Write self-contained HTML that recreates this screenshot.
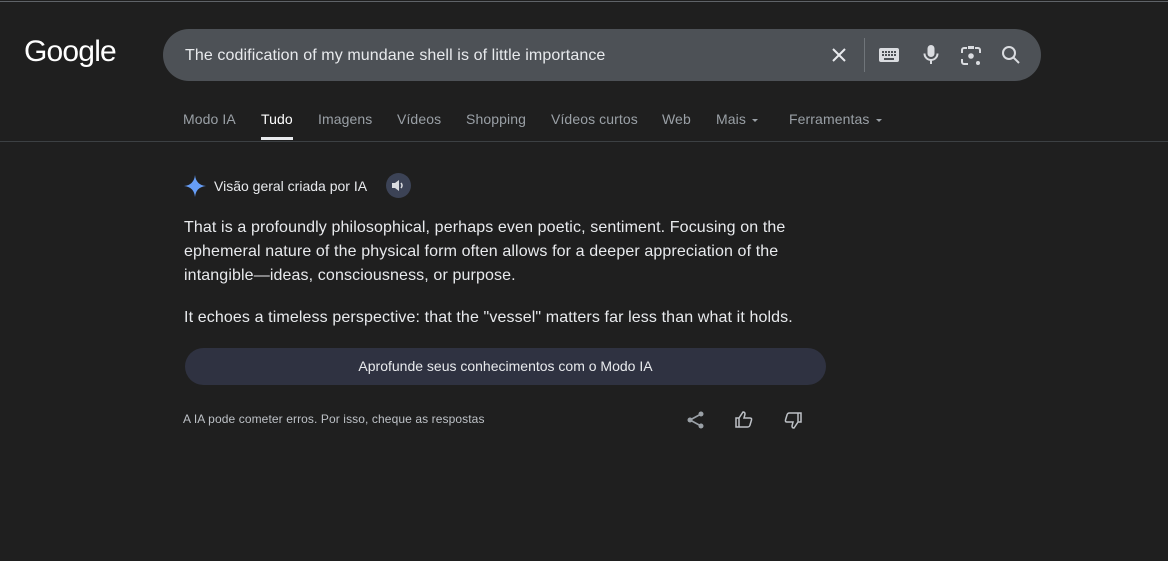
<!DOCTYPE html>
<html><head><meta charset="utf-8"><style>
body{margin:0;width:1168px;height:561px;background:#1f1f1f;font-family:"Liberation Sans",Arial,sans-serif;position:relative;overflow:hidden;color:#e8eaed}
.a{position:absolute}
.top{left:0;top:1px;width:1168px;height:1px;background:#5f6368}
.logo{left:24px;top:35px;font-size:30px;color:#fff;letter-spacing:-0.8px}
.sb{left:163px;top:29px;width:878px;height:52px;background:#4d5156;border-radius:26px}
.q{left:185px;top:47px;font-size:16px;color:#e8eaed;letter-spacing:0.1px}
.tab{top:111px;font-size:14px;color:#9aa0a6;letter-spacing:0.1px}
.line{left:0;top:141px;width:1168px;height:1px;background:#3c4043}
.p{left:184px;font-size:16px;color:#e8eaed;line-height:24px;width:660px;letter-spacing:0.12px}
.ar{display:inline-block;width:0;height:0;border-left:3.5px solid transparent;border-right:3.5px solid transparent;border-top:3.5px solid #9aa0a6;vertical-align:middle;margin-left:3px}
</style></head><body>
<div class="a top"></div>
<div class="a logo">Google</div>
<div class="a sb"></div>
<div class="a q">The codification of my mundane shell is of little importance</div>
<svg class="a" style="left:829px;top:45px" width="20" height="20" viewBox="0 0 20 20"><path d="M4 4L16 16M16 4L4 16" stroke="#e8eaed" stroke-width="2"/></svg>
<div class="a" style="left:864px;top:38px;width:1px;height:34px;background:#70757a"></div>
<svg class="a" style="left:878px;top:47px" width="22" height="16" viewBox="0 0 22 16"><rect x="1" y="1" width="20" height="14" rx="2" fill="#dadce0"/><g fill="#4d5156"><rect x="4" y="4" width="2" height="2"/><rect x="7" y="4" width="2" height="2"/><rect x="10" y="4" width="2" height="2"/><rect x="13" y="4" width="2" height="2"/><rect x="16" y="4" width="2" height="2"/><rect x="4" y="7" width="2" height="2"/><rect x="7" y="7" width="2" height="2"/><rect x="10" y="7" width="2" height="2"/><rect x="13" y="7" width="2" height="2"/><rect x="16" y="7" width="2" height="2"/><rect x="6" y="11" width="10" height="2"/></g></svg>
<svg class="a" style="left:921px;top:44px" width="20" height="22" viewBox="0 0 20 22"><rect x="6.5" y="1" width="7" height="12" rx="3.5" fill="#dadce0"/><path d="M3.5 9.5a6.5 6.5 0 0 0 13 0M10 16v4" stroke="#dadce0" stroke-width="2" fill="none"/></svg>
<svg class="a" style="left:960px;top:45px" width="22" height="22" viewBox="0 0 22 22"><path d="M2 8V5a2 2 0 0 1 2-2h3M15 3h3a2 2 0 0 1 2 2v3M2 14v3a2 2 0 0 0 2 2h4" stroke="#dadce0" stroke-width="2" fill="none"/><rect x="8" y="1" width="6" height="3" fill="#dadce0"/><circle cx="11" cy="11" r="2.8" fill="#dadce0"/><circle cx="18" cy="18" r="2" fill="#dadce0"/></svg>
<svg class="a" style="left:1001px;top:45px" width="20" height="20" viewBox="0 0 20 20"><circle cx="8" cy="8" r="6" stroke="#dadce0" stroke-width="2" fill="none"/><path d="M12.5 12.5L18 18" stroke="#dadce0" stroke-width="2"/></svg>
<div class="a tab" style="left:183px">Modo IA</div>
<div class="a tab" style="left:261px;color:#fff">Tudo</div>
<div class="a" style="left:261px;top:137px;width:32px;height:3px;background:#e8eaed"></div>
<div class="a tab" style="left:318px">Imagens</div>
<div class="a tab" style="left:397px">Vídeos</div>
<div class="a tab" style="left:466px">Shopping</div>
<div class="a tab" style="left:551px">Vídeos curtos</div>
<div class="a tab" style="left:662px">Web</div>
<div class="a tab" style="left:716px">Mais<span class="ar" style="margin-left:6px"></span></div>
<div class="a tab" style="left:789px">Ferramentas<span class="ar" style="margin-left:7px"></span></div>
<div class="a line"></div>
<svg class="a" style="left:183px;top:174px" width="24" height="24" viewBox="0 0 24 24"><path d="M12 1Q13 11 23 12Q13 13 12 23Q11 13 1 12Q11 11 12 1Z" fill="#669df6"/></svg>
<div class="a" style="left:214px;top:178px;font-size:14px;color:#e8eaed">Visão geral criada por IA</div>
<div class="a" style="left:386px;top:173px;width:25px;height:25px;border-radius:50%;background:#3c4356"></div>
<svg class="a" style="left:391px;top:179px" width="14" height="13" viewBox="0 0 14 13"><path d="M1 4h3l4-3v11l-4-3H1z" fill="#dadce0"/><path d="M10 4q2 2.5 0 5" stroke="#dadce0" stroke-width="1.5" fill="none"/></svg>
<div class="a p" style="top:216px">That is a profoundly philosophical, perhaps even poetic, sentiment. Focusing on the<br>ephemeral nature of the physical form often allows for a deeper appreciation of the<br>intangible—ideas, consciousness, or purpose.</div>
<div class="a p" style="top:306px">It echoes a timeless perspective: that the "vessel" matters far less than what it holds.</div>
<div class="a" style="left:185px;top:348px;width:641px;height:37px;border-radius:19px;background:#2f3241;color:#e8eaed;font-size:14px;text-align:center;line-height:37px">Aprofunde seus conhecimentos com o Modo IA</div>
<div class="a" style="left:183px;top:412px;font-size:12px;color:#bdc1c6;letter-spacing:0.1px">A IA pode cometer erros. Por isso, cheque as respostas</div>
<svg class="a" style="left:686px;top:410px" width="20" height="20" viewBox="0 0 20 20"><circle cx="15" cy="4" r="2.5" fill="#9aa0a6"/><circle cx="4" cy="10" r="2.5" fill="#9aa0a6"/><circle cx="15" cy="16" r="2.5" fill="#9aa0a6"/><path d="M15 4L4 10L15 16" stroke="#9aa0a6" stroke-width="1.6" fill="none"/></svg>
<svg class="a" style="left:734px;top:410px" width="20" height="20" viewBox="0 0 20 20"><path d="M2 8h3v9H2zM5 8l4-6q2 0 2 2l-1 4h6q2 0 1.5 2l-1.5 5q-.5 2-2.5 2H5" stroke="#bdc1c6" stroke-width="1.5" fill="none"/></svg>
<svg class="a" style="left:783px;top:410px" width="20" height="20" viewBox="0 0 20 20"><path d="M18 12h-3V3h3zM15 12l-4 6q-2 0-2-2l1-4H4q-2 0-1.5-2L4 5q.5-2 2.5-2H15" stroke="#bdc1c6" stroke-width="1.5" fill="none"/></svg>
</body></html>
